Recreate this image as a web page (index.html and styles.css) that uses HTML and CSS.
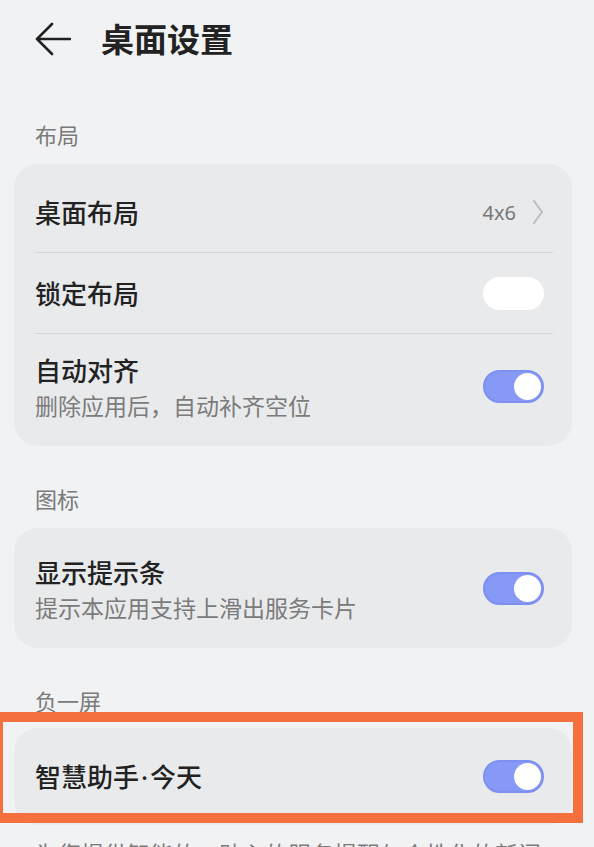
FILE: index.html
```html
<!DOCTYPE html>
<html lang="zh-CN">
<head>
    <meta charset="UTF-8">
    <meta name="viewport" content="width=device-width, initial-scale=1.0">
    <title>桌面设置</title>
    <link rel="stylesheet" href="styles.css">
</head>
<body>
    <header class="topbar">
        <svg class="back" width="36" height="34" viewBox="0 0 36 34" aria-hidden="true">
            <path d="M17 2 L2 17 L17 32 M2 17 L35 17" fill="none" stroke="#222" stroke-width="2.6" stroke-linecap="round" stroke-linejoin="round"/>
        </svg>
        <h1>桌面设置</h1>
    </header>

    <h2 class="section-title">布局</h2>
    <div class="card">
        <div class="row">
            <div class="text"><div class="label">桌面布局</div></div>
            <div class="value">4x6</div>
            <svg class="chevron" width="12" height="26" viewBox="0 0 12 26" aria-hidden="true">
                <path d="M2 2 L10 13 L2 24" fill="none" stroke="#bdbdbd" stroke-width="2" stroke-linecap="round" stroke-linejoin="round"/>
            </svg>
        </div>
        <div class="row">
            <div class="text"><div class="label">锁定布局</div></div>
            <span class="switch off"></span>
        </div>
        <div class="row tall">
            <div class="text">
                <div class="label">自动对齐</div>
                <div class="sub">删除应用后，自动补齐空位</div>
            </div>
            <span class="switch on"></span>
        </div>
    </div>

    <h2 class="section-title">图标</h2>
    <div class="card">
        <div class="row tall">
            <div class="text">
                <div class="label">显示提示条</div>
                <div class="sub">提示本应用支持上滑出服务卡片</div>
            </div>
            <span class="switch on"></span>
        </div>
    </div>

    <h2 class="section-title">负一屏</h2>
    <div class="marked">
        <div class="card">
            <div class="row">
                <div class="text"><div class="label">智慧助手<span class="dot">·</span>今天</div></div>
                <span class="switch on"></span>
            </div>
        </div>
        <div class="highlight"></div>
    </div>
    <p class="note">为您提供智能的、贴心的服务提醒与个性化的新闻</p>
</body>
</html>
```

FILE: styles.css
```css
body {
    margin: 0;
    background-color: #f1f2f4;
    color: #1f1f1f;
    font-family: "Noto Sans CJK SC", "Noto Sans", sans-serif;
    width: 594px;
    overflow: hidden;
}
.topbar {
    display: flex;
    align-items: center;
    height: 76px;
    padding-left: 35px;
}
.back {
    display: block;
    margin-top: 2px;
}
.topbar h1 {
    margin: 0 0 0 30px;
    font-size: 33px;
    font-weight: 700;
    line-height: 1;
    color: #222;
}
.section-title {
    margin: 38px 0 16px 35px;
    font-size: 22px;
    font-weight: 400;
    line-height: 28px;
    color: #7a7a7a;
}
.topbar + .section-title {
    margin-top: 44px;
}
.card {
    background-color: #e9eaec;
    border-radius: 24px;
    margin: 0 22px 0 14px;
    padding: 8px 19px 8px 21px;
}
.row {
    display: flex;
    align-items: center;
    min-height: 81px;
    padding-right: 9px;
    border-bottom: 1px solid #d5d6d8;
    box-sizing: border-box;
}
.row:last-child {
    border-bottom: none;
}
.row.tall {
    min-height: 104px;
}
.text {
    flex: 1;
}
.label {
    font-size: 26px;
    font-weight: 500;
    line-height: 36px;
    color: #222;
}
.dot {
    font-family: "Noto Sans", sans-serif;
    margin: 0 2px;
}
.sub {
    font-size: 23px;
    line-height: 32px;
    color: #7b7b7b;
    margin-top: 1px;
}
.value {
    font-family: "Noto Sans", sans-serif;
    font-size: 20px;
    color: #777;
    margin-right: 16px;
}
.chevron {
    display: block;
}
.switch {
    position: relative;
    width: 61px;
    height: 33px;
    border-radius: 17px;
    box-sizing: border-box;
}
.switch.off {
    background-color: #fff;
}
.switch.on {
    background-color: #8799f6;
    border: 2px solid #7d90ef;
}
.switch.on::after {
    content: "";
    position: absolute;
    right: 1px;
    top: 1px;
    width: 27px;
    height: 27px;
    border-radius: 50%;
    background-color: #fff;
}
.marked {
    position: relative;
    margin-top: -2px;
}
.highlight {
    position: absolute;
    top: -16px;
    left: -7px;
    width: 590px;
    height: 111px;
    border: 10px solid #f4703f;
    box-sizing: border-box;
}
.note {
    margin: 12px 0 0 35px;
    font-size: 23px;
    line-height: 32px;
    color: #7b7b7b;
}
```
